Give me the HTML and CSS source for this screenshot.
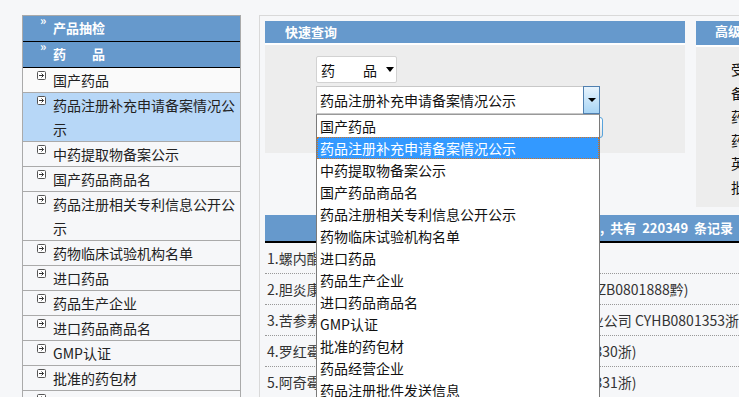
FILE: index.html
```html
<!DOCTYPE html>
<html lang="zh-CN">
<head>
  <meta charset="UTF-8" />
  <title>数据查询</title>
  <link rel="stylesheet" href="styles.css">
</head>
<body>
  <div class="page">

    <!-- Left menu -->
    <div class="sidebar">
      <div class="side-head"><span class="raquo">&raquo;</span>产品抽检</div>
      <div class="side-head"><span class="raquo">&raquo;</span>药　　品</div>
      <ul class="side-list">
        <li><svg class="ico" viewBox="0 0 9 9"><rect x="0.5" y="0.5" width="8" height="8" rx="1"/><path d="M2 4.5h4.5M4.5 2.5l2 2-2 2"/></svg><span>国产药品</span></li>
        <li class="current"><svg class="ico" viewBox="0 0 9 9"><rect x="0.5" y="0.5" width="8" height="8" rx="1"/><path d="M2 4.5h4.5M4.5 2.5l2 2-2 2"/></svg><span>药品注册补充申请备案情况公示</span></li>
        <li><svg class="ico" viewBox="0 0 9 9"><rect x="0.5" y="0.5" width="8" height="8" rx="1"/><path d="M2 4.5h4.5M4.5 2.5l2 2-2 2"/></svg><span>中药提取物备案公示</span></li>
        <li><svg class="ico" viewBox="0 0 9 9"><rect x="0.5" y="0.5" width="8" height="8" rx="1"/><path d="M2 4.5h4.5M4.5 2.5l2 2-2 2"/></svg><span>国产药品商品名</span></li>
        <li><svg class="ico" viewBox="0 0 9 9"><rect x="0.5" y="0.5" width="8" height="8" rx="1"/><path d="M2 4.5h4.5M4.5 2.5l2 2-2 2"/></svg><span>药品注册相关专利信息公开公示</span></li>
        <li><svg class="ico" viewBox="0 0 9 9"><rect x="0.5" y="0.5" width="8" height="8" rx="1"/><path d="M2 4.5h4.5M4.5 2.5l2 2-2 2"/></svg><span>药物临床试验机构名单</span></li>
        <li><svg class="ico" viewBox="0 0 9 9"><rect x="0.5" y="0.5" width="8" height="8" rx="1"/><path d="M2 4.5h4.5M4.5 2.5l2 2-2 2"/></svg><span>进口药品</span></li>
        <li><svg class="ico" viewBox="0 0 9 9"><rect x="0.5" y="0.5" width="8" height="8" rx="1"/><path d="M2 4.5h4.5M4.5 2.5l2 2-2 2"/></svg><span>药品生产企业</span></li>
        <li><svg class="ico" viewBox="0 0 9 9"><rect x="0.5" y="0.5" width="8" height="8" rx="1"/><path d="M2 4.5h4.5M4.5 2.5l2 2-2 2"/></svg><span>进口药品商品名</span></li>
        <li><svg class="ico" viewBox="0 0 9 9"><rect x="0.5" y="0.5" width="8" height="8" rx="1"/><path d="M2 4.5h4.5M4.5 2.5l2 2-2 2"/></svg><span>GMP认证</span></li>
        <li><svg class="ico" viewBox="0 0 9 9"><rect x="0.5" y="0.5" width="8" height="8" rx="1"/><path d="M2 4.5h4.5M4.5 2.5l2 2-2 2"/></svg><span>批准的药包材</span></li>
        <li><svg class="ico" viewBox="0 0 9 9"><rect x="0.5" y="0.5" width="8" height="8" rx="1"/><path d="M2 4.5h4.5M4.5 2.5l2 2-2 2"/></svg><span>药品经营企业</span></li>
      </ul>
    </div>

    <!-- Main area -->
    <div class="main">
      <div class="top-row">

        <div class="box quick">
          <div class="box-head">快速查询</div>
          <div class="box-body">
            <div class="fake-select small">药　　品<i class="caret"></i></div>
            <div class="combo">
              <div class="fake-select wide">
                <span>药品注册补充申请备案情况公示</span>
                <span class="drop-btn"><i class="caret"></i></span>
              </div>
              <ul class="options">
                <li>国产药品</li>
                <li class="selected">药品注册补充申请备案情况公示</li>
                <li>中药提取物备案公示</li>
                <li>国产药品商品名</li>
                <li>药品注册相关专利信息公开公示</li>
                <li>药物临床试验机构名单</li>
                <li>进口药品</li>
                <li>药品生产企业</li>
                <li>进口药品商品名</li>
                <li>GMP认证</li>
                <li>批准的药包材</li>
                <li>药品经营企业</li>
                <li>药品注册批件发送信息</li>
                <li>GSP认证</li>
              </ul>
            </div>
            <button class="go-btn">查 询</button>
          </div>
        </div>

        <div class="box adv">
          <div class="box-head tall">高级查询</div>
          <div class="box-body adv-body">
            <div>受理号：</div>
            <div>备案号：</div>
            <div>药品名称：</div>
            <div>药品分类：</div>
            <div>英文名称：</div>
            <div>批准文号：</div>
          </div>
        </div>

      </div>

      <div class="result-head"><span>药品注册补充申请备案情况公示列表, 共有 220349 条记录</span></div>
      <ul class="result-list">
        <li>1.螺内酯片 (CYHB0801234苏)</li>
        <li>2.胆炎康软胶囊 贵州百灵企业集团制药股份有限公司 (ZB0801888黔)</li>
        <li>3.苦参素葡萄糖注射液 浙江杭州市正大青春宝医药工业公司 CYHB0801353浙江</li>
        <li>4.罗红霉素分散片 浙江京新药业有限公司 (CYHB0801330浙)</li>
        <li>5.阿奇霉素分散片 浙江京新药业有限公司 (CYHB0801331浙)</li>
      </ul>
    </div>

  </div>
</body>
</html>
```

FILE: styles.css
```css
body {
  margin: 0;
  padding: 0;
  background-color: #f6f7f9;
  font-family: "Noto Sans CJK SC", "Liberation Sans", sans-serif;
  font-size: 14px;
  color: #222;
  overflow: hidden;
}

ul {
  list-style: none;
  margin: 0;
  padding: 0;
}

.page {
  display: flex;
  align-items: flex-start;
  padding: 15px 0 0 22px;
  width: 1000px;
}

/* Left menu */

.sidebar {
  width: 217px;
  flex: none;
  border: 1px solid #aaa;
  border-bottom: none;
}

.side-head {
  display: flex;
  align-items: flex-start;
  height: 25px;
  padding-left: 17px;
  background-color: #6699cc;
  border-bottom: 1px solid #000;
  color: #fff;
  font-size: 13px;
  font-weight: bold;
  line-height: 24px;
}

.raquo {
  width: 13px;
  font-size: 12px;
  line-height: 8px;
}

.side-list li {
  display: flex;
  align-items: flex-start;
  padding-left: 14px;
  line-height: 24px;
  border-bottom: 1px solid #aaa;
  background-color: #f6f7f9;
}

.side-list li:first-child {
  background-color: #fafafa;
}

.side-list li.current {
  background-color: #b7d7f7;
}

.ico {
  flex: none;
  width: 9px;
  height: 9px;
  margin: 3px 7px 0 0;
}

.ico rect {
  fill: #fff;
  stroke: #555;
  stroke-width: 1;
}

.ico path {
  fill: none;
  stroke: #333;
  stroke-width: 1;
}

/* Main area */

.main {
  margin-left: 18px;
  width: 640px;
  padding: 5px;
  border: 1px solid #d9d9d9;
}

.top-row {
  display: flex;
  align-items: flex-start;
  gap: 11px;
}

.box-head {
  height: 22px;
  padding-left: 20px;
  background-color: #6699cc;
  border-bottom: 2px solid #fff;
  color: #fff;
  font-size: 13px;
  font-weight: bold;
  line-height: 21px;
}

.box-head.tall {
  height: 24px;
  padding-left: 19px;
  line-height: 19px;
}

.box-body {
  background-color: #ededed;
}

.quick {
  width: 420px;
}

.quick .box-body {
  height: 97px;
  padding: 11px 0 0 51px;
}

.adv {
  width: 200px;
}

.adv-body {
  height: 149px;
  padding: 11px 0 0 35px;
  color: #111;
  line-height: 23.5px;
  white-space: nowrap;
}

.fake-select {
  display: flex;
  align-items: center;
  box-sizing: border-box;
  background-color: #fff;
  color: #111;
}

.fake-select.small {
  width: 81px;
  height: 27px;
  padding-left: 4px;
  border: 1px solid #d2d2d2;
  border-radius: 2px;
  margin-bottom: 3px;
}

.fake-select.small .caret {
  margin-left: 9px;
}

.caret {
  display: inline-block;
  width: 0;
  height: 0;
  border-top: 5px solid #000;
  border-left: 4px solid transparent;
  border-right: 4px solid transparent;
}

.combo {
  position: relative;
  width: 284px;
}

.fake-select.wide {
  width: 284px;
  height: 28px;
  padding-left: 3px;
  border: 1px solid #c8c8c8;
  border-right: none;
}

.drop-btn {
  display: flex;
  align-items: center;
  justify-content: center;
  box-sizing: border-box;
  margin-left: auto;
  width: 17px;
  height: 28px;
  margin-top: -1px;
  margin-bottom: -1px;
  border: 1px solid #5080b0;
  background: linear-gradient(#e8f4fd, #a8d5f5);
}

.drop-btn .caret {
  border-top-width: 4px;
  border-left-width: 4px;
  border-right-width: 4px;
}

.options {
  position: absolute;
  top: 100%;
  left: 0;
  z-index: 10;
  width: 284px;
  box-sizing: border-box;
  background-color: #fff;
  border: 1px solid #7a7a7a;
  border-top-color: #999;
}

.options li {
  box-sizing: border-box;
  height: 22px;
  padding-left: 2px;
  line-height: 21px;
  color: #111;
  white-space: nowrap;
  border: 1px solid transparent;
}

.options li.selected {
  background-color: #3399ff;
  color: #fff;
  border: 1px dotted #d9731c;
}

.go-btn {
  display: block;
  margin: 3px 0 0 227px;
  width: 60px;
  height: 21px;
  padding: 0;
  border: 1px solid #57a3dc;
  border-radius: 3px;
  background: linear-gradient(#fff, #e2e2e2);
  font-family: inherit;
  font-size: 12px;
}

/* Results */

.result-head {
  margin-top: 8px;
  height: 26px;
  background-color: #6699cc;
  border-bottom: 2px solid #000;
  color: #fff;
  font-size: 13px;
  font-weight: bold;
  line-height: 26px;
  white-space: nowrap;
}

.result-head span {
  padding-left: 127px;
  word-spacing: 3px;
}

.result-list li {
  height: 30px;
  padding-left: 2px;
  line-height: 30px;
  border-bottom: 1px dotted #999;
  color: #333;
  white-space: nowrap;
}
```
